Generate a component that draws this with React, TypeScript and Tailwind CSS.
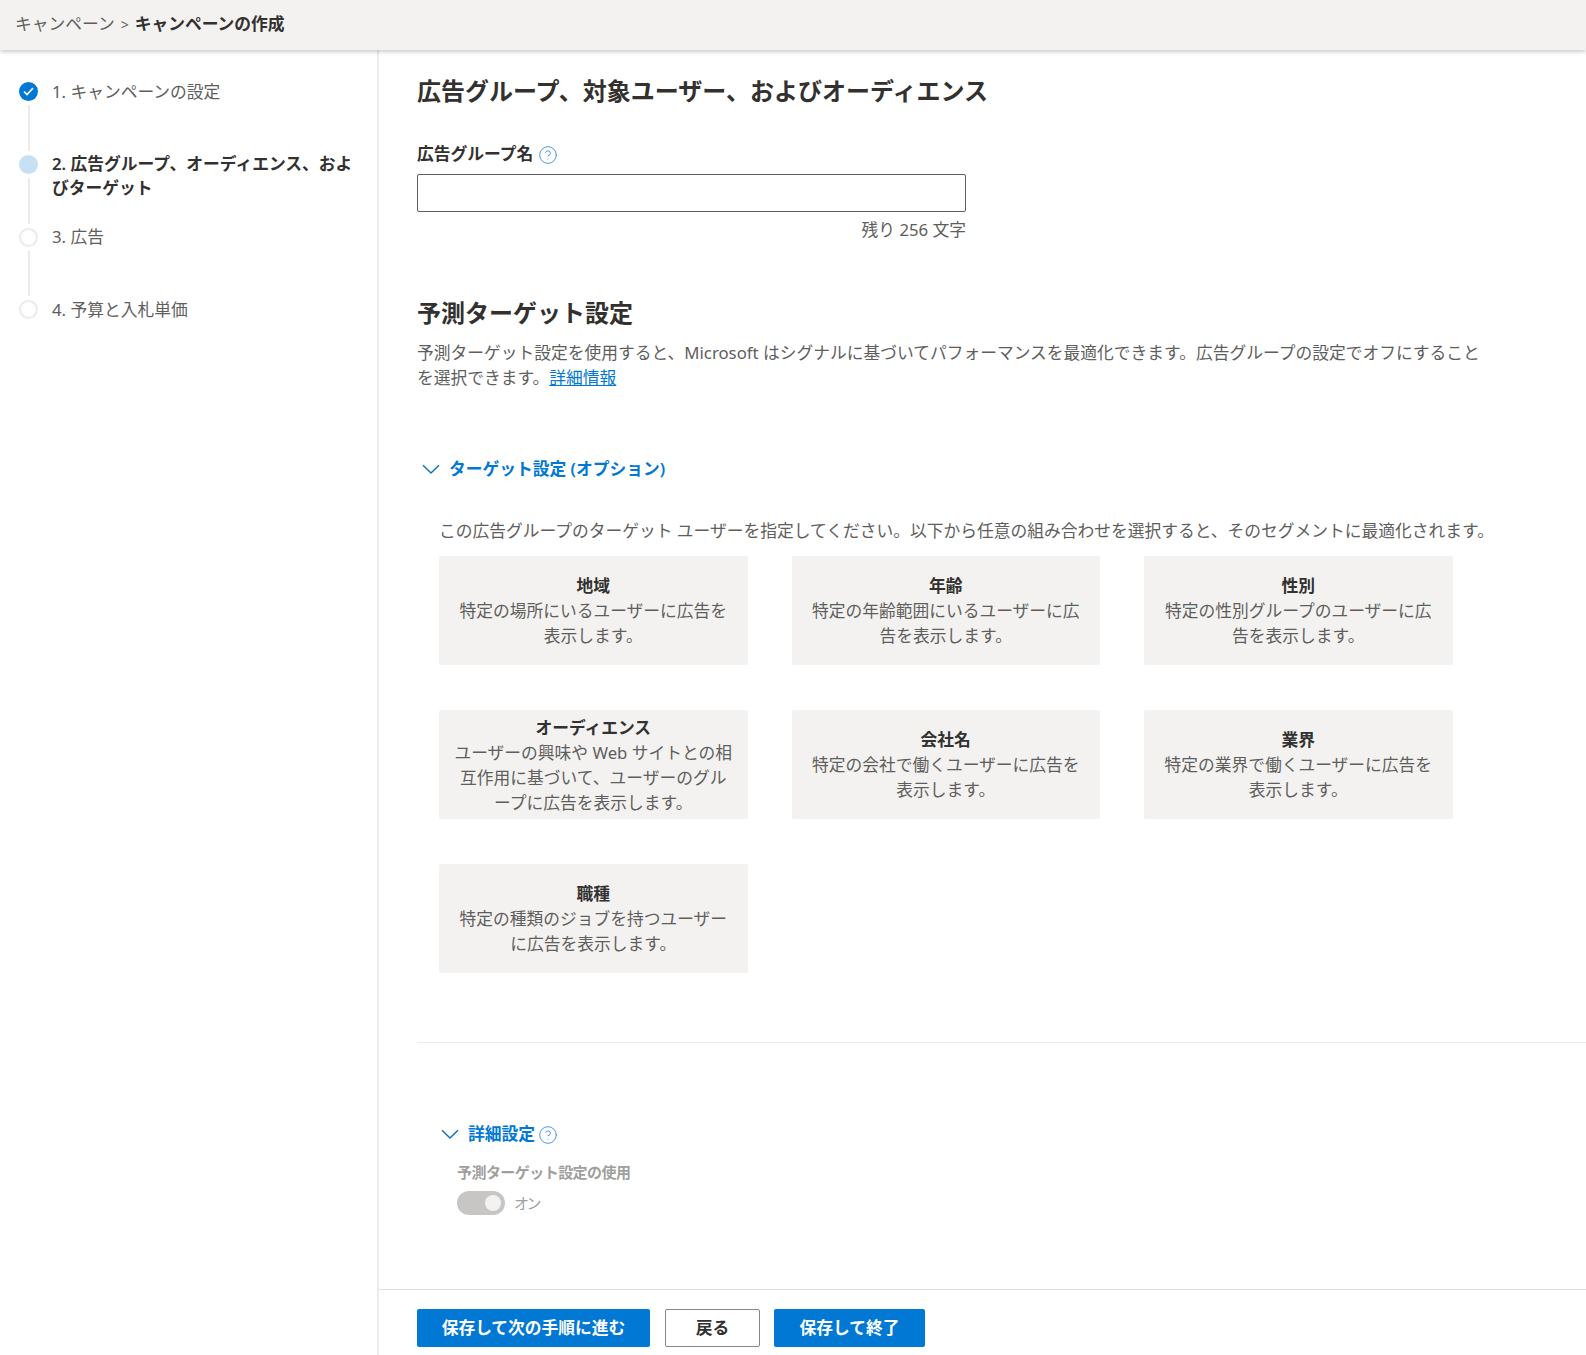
import { CircleHelp } from "lucide-react";

const font = "font-['Noto_Sans','Noto_Sans_CJK_JP',sans-serif]";

function Chevron() {
  return (
    <svg width="18" height="10" viewBox="0 0 18 10" fill="none" className="shrink-0">
      <path d="M1 1.2 L9 9 L17 1.2" stroke="#106ebe" strokeWidth="1.4" />
    </svg>
  );
}

function Help() {
  return <CircleHelp size={20} strokeWidth={1.1} className="text-[#3b8ede] shrink-0 mt-0.5" />;
}

const steps = [
  { label: "1. キャンペーンの設定", state: "done" },
  { label: "2. 広告グループ、オーディエンス、およびターゲット", state: "current" },
  { label: "3. 広告", state: "todo" },
  { label: "4. 予算と入札単価", state: "todo", last: true },
];

function Step({ label, state, last }: { label: string; state: string; last?: boolean }) {
  return (
    <div className="flex gap-[14px] h-[72.8px]">
      <div className="flex flex-col items-center w-[19px] shrink-0">
        {state === "done" && (
          <div className="w-[19px] h-[19px] rounded-full bg-[#0078d4] flex items-center justify-center">
            <svg width="11" height="9" viewBox="0 0 11 9" fill="none">
              <path d="M1 4.5 L4 7.5 L10 1.2" stroke="#fff" strokeWidth="1.7" />
            </svg>
          </div>
        )}
        {state === "current" && <div className="w-[19px] h-[19px] rounded-full bg-[#c7e0f4]" />}
        {state === "todo" && <div className="w-[19px] h-[19px] rounded-full bg-white border-2 border-[#edebe9]" />}
        {!last && <div className="w-0.5 flex-1 bg-[#edebe9] mt-1 mb-1" />}
      </div>
      <div
        className={`-mt-[2.5px] leading-[23.4px] ${
          state === "current" ? "font-semibold text-[#323130]" : "text-[#605e5c]"
        }`}
      >
        {label}
      </div>
    </div>
  );
}

const cards = [
  { t: "地域", d: "特定の場所にいるユーザーに広告を表示します。" },
  { t: "年齢", d: "特定の年齢範囲にいるユーザーに広告を表示します。" },
  { t: "性別", d: "特定の性別グループのユーザーに広告を表示します。" },
  { t: "オーディエンス", d: "ユーザーの興味や Web サイトとの相互作用に基づいて、ユーザーのグループに広告を表示します。" },
  { t: "会社名", d: "特定の会社で働くユーザーに広告を表示します。" },
  { t: "業界", d: "特定の業界で働くユーザーに広告を表示します。" },
  { t: "職種", d: "特定の種類のジョブを持つユーザーに広告を表示します。" },
];

export default function App() {
  return (
    <div className={`${font} h-[1355px] flex flex-col bg-white text-[#323130] text-[16.75px] overflow-hidden`}>
      <header className="relative z-10 h-[50px] shrink-0 bg-[#f3f2f1] shadow-[0_2px_4px_rgba(0,0,0,0.2)] flex items-center pl-[15px] pb-[2px]">
        <span className="text-[#605e5c]">キャンペーン</span>
        <span className="text-[#605e5c] mx-[6px] text-[14px]">&gt;</span>
        <span className="font-semibold text-[#323130]">キャンペーンの作成</span>
      </header>

      <div className="flex flex-1 min-h-0">
        <aside className="w-[379px] shrink-0 border-r-2 border-[#edebe9] pl-[19px] pr-[18px] pt-[32px]">
          {steps.map((s) => (
            <Step key={s.label} label={s.label} state={s.state} last={s.last} />
          ))}
        </aside>

        <main className="flex-1 min-w-0 flex flex-col">
          <div className="flex-1 min-h-0 overflow-hidden pl-[38px] pt-[25px]">
            <h1 className="text-[24px] leading-[32px] font-semibold">広告グループ、対象ユーザー、およびオーディエンス</h1>

            <div className="mt-[35px] flex items-center gap-[5px] leading-6 font-semibold">
              広告グループ名
              <Help />
            </div>
            <input
              aria-label="広告グループ名"
              className="mt-2 block w-[549px] h-[38px] border border-[#605e5c] rounded-[2px] bg-white"
            />
            <div className="mt-[6px] w-[549px] text-right leading-6 text-[#605e5c]">残り 256 文字</div>

            <h2 className="mt-[55px] text-[24px] leading-[32px] font-semibold">予測ターゲット設定</h2>
            <p className="mt-[11px] w-[1066px] leading-[25px] text-[#605e5c]">
              予測ターゲット設定を使用すると、Microsoft はシグナルに基づいてパフォーマンスを最適化できます。広告グループの設定でオフにすることを選択できます。
              <a href="#" className="text-[#0078d4] underline">
                詳細情報
              </a>
            </p>

            <div className="mt-[67px] ml-[5px] flex items-center gap-[9px] leading-6 font-semibold text-[#0078d4]">
              <Chevron />
              ターゲット設定 (オプション)
            </div>

            <div className="ml-[22px]">
              <p className="mt-[38px] leading-6 text-[#605e5c] whitespace-nowrap">
                この広告グループのターゲット ユーザーを指定してください。以下から任意の組み合わせを選択すると、そのセグメントに最適化されます。
              </p>
              <div className="mt-[13px] grid grid-cols-[repeat(3,308.5px)] auto-rows-[109px] gap-x-[44px] gap-y-[45px]">
                {cards.map((c) => (
                  <div
                    key={c.t}
                    className="bg-[#f3f2f1] rounded-[2px] flex flex-col items-center justify-center text-center px-[14px] leading-[25px] text-[#605e5c] [line-break:loose]"
                  >
                    <div className="font-semibold text-[#323130]">{c.t}</div>
                    <div>{c.d}</div>
                  </div>
                ))}
              </div>
            </div>

            <div className="mt-[69px] h-px bg-[#edebe9]" />

            <div className="mt-[79px] ml-[24px] flex items-center gap-[9px] leading-6 font-semibold text-[#0078d4]">
              <Chevron />
              詳細設定
              <span className="-ml-[6px]">
                <Help />
              </span>
            </div>
            <div className="mt-[14px] ml-[40px] leading-6 text-[15px] tracking-[-0.55px] font-semibold text-[#a19f9d]">
              予測ターゲット設定の使用
            </div>
            <div className="mt-[7px] ml-[40px] flex items-center gap-[9px]">
              <div className="w-[48px] h-6 rounded-full bg-[#c8c6c4] flex items-center justify-end pr-[4px]">
                <div className="w-4 h-4 rounded-full bg-[#f3f2f1]" />
              </div>
              <span className="text-[15px] tracking-[-2.5px] text-[#a19f9d]">オン</span>
            </div>
          </div>

          <footer className="h-[66px] shrink-0 border-t border-[#e1dfdd] pl-[38px] pt-[19px] flex items-start gap-[15px]">
            <button className="w-[233px] h-[38px] rounded-[2px] bg-[#0078d4] text-white font-semibold">
              保存して次の手順に進む
            </button>
            <button className="w-[95px] h-[38px] rounded-[2px] bg-white border border-[#8a8886] text-[#323130] font-semibold">
              戻る
            </button>
            <button className="w-[151px] h-[38px] -ml-px rounded-[2px] bg-[#0078d4] text-white font-semibold">
              保存して終了
            </button>
          </footer>
        </main>
      </div>
    </div>
  );
}
